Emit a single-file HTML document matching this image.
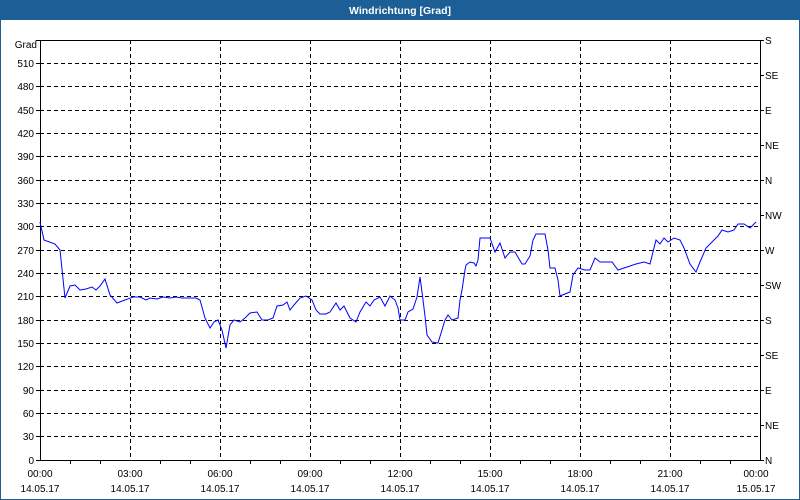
<!DOCTYPE html>
<html><head><style>
html,body{margin:0;padding:0;width:800px;height:500px;overflow:hidden;background:#fff;font-family:"Liberation Sans",sans-serif}
</style></head><body>
<svg width="800" height="500" xmlns="http://www.w3.org/2000/svg" font-family="Liberation Sans, sans-serif" font-size="10">
<rect x="0" y="0" width="800" height="500" fill="#fff"/>
<rect x="0" y="0" width="800" height="20" fill="#1c5f96"/>
<rect x="0" y="0" width="1" height="500" fill="#1c5f96"/>
<rect x="799" y="0" width="1" height="500" fill="#1c5f96"/>
<rect x="0" y="499" width="800" height="1" fill="#1c5f96"/>
<text x="400" y="14" fill="#fff" font-weight="bold" font-size="10.5" text-anchor="middle">Windrichtung [Grad]</text>
<g stroke="#000" stroke-dasharray="4,3" stroke-width="1">
<path d="M40 63.5H760M40 86.5H760M40 110.5H760M40 133.5H760M40 156.5H760M40 180.5H760M40 203.5H760M40 226.5H760M40 250.5H760M40 273.5H760M40 296.5H760M40 320.5H760M40 343.5H760M40 366.5H760M40 390.5H760M40 413.5H760M40 436.5H760"/>
<path d="M130.5 40V460M220.5 40V460M310.5 40V460M400.5 40V460M490.5 40V460M580.5 40V460M670.5 40V460"/>
</g>
<g stroke="#000" stroke-width="1" fill="none">
<path d="M40.5 40V460.5H760.5V40M40 40.5H760"/>
<path d="M36 40.5H40M36 63.5H40M36 86.5H40M36 110.5H40M36 133.5H40M36 156.5H40M36 180.5H40M36 203.5H40M36 226.5H40M36 250.5H40M36 273.5H40M36 296.5H40M36 320.5H40M36 343.5H40M36 366.5H40M36 390.5H40M36 413.5H40M36 436.5H40M36 460.5H40"/>
<path d="M760 40.5H764M760 75.5H764M760 110.5H764M760 145.5H764M760 180.5H764M760 215.5H764M760 250.5H764M760 285.5H764M760 320.5H764M760 355.5H764M760 390.5H764M760 425.5H764M760 460.5H764"/>
<path d="M70.5 460V464M100.5 460V464M160.5 460V464M190.5 460V464M250.5 460V464M280.5 460V464M340.5 460V464M370.5 460V464M430.5 460V464M460.5 460V464M520.5 460V464M550.5 460V464M610.5 460V464M640.5 460V464M700.5 460V464M730.5 460V464"/>
</g>
<g text-anchor="end" fill="#000">
<text x="37" y="48">Grad</text>
<text x="34" y="67">510</text><text x="34" y="90">480</text><text x="34" y="114">450</text><text x="34" y="137">420</text><text x="34" y="160">390</text><text x="34" y="184">360</text><text x="34" y="207">330</text><text x="34" y="230">300</text><text x="34" y="254">270</text><text x="34" y="277">240</text><text x="34" y="300">210</text><text x="34" y="324">180</text><text x="34" y="347">150</text><text x="34" y="370">120</text><text x="34" y="394">90</text><text x="34" y="417">60</text><text x="34" y="440">30</text><text x="34" y="464">0</text>
</g>
<g fill="#000">
<text x="765" y="44">S</text><text x="765" y="79">SE</text><text x="765" y="114">E</text><text x="765" y="149">NE</text><text x="765" y="184">N</text><text x="765" y="219">NW</text><text x="765" y="254">W</text><text x="765" y="289">SW</text><text x="765" y="324">S</text><text x="765" y="359">SE</text><text x="765" y="394">E</text><text x="765" y="429">NE</text><text x="765" y="464">N</text>
</g>
<g text-anchor="middle" fill="#000">
<text x="40" y="477">00:00</text><text x="130" y="477">03:00</text><text x="220" y="477">06:00</text><text x="310" y="477">09:00</text><text x="400" y="477">12:00</text><text x="490" y="477">15:00</text><text x="580" y="477">18:00</text><text x="670" y="477">21:00</text><text x="756" y="477">00:00</text>
<text x="40" y="492">14.05.17</text><text x="130" y="492">14.05.17</text><text x="220" y="492">14.05.17</text><text x="310" y="492">14.05.17</text><text x="400" y="492">14.05.17</text><text x="490" y="492">14.05.17</text><text x="580" y="492">14.05.17</text><text x="670" y="492">14.05.17</text><text x="756" y="492">15.05.17</text>
</g>
<polyline fill="none" stroke="#0000ff" stroke-width="1" points="40,222 44,240 55,244 60,250 65,298 70,286 75,285 80,290 86,289 92,287 96,290 100,286 105,279 110,295 117,303 125,300 133,297 140,297 146,300 150,298 157,299 163,297 170,298 176,297 182,298 190,298 196,298 200,300 205,318 210,328 214,322 218,320 222,330 226,348 230,325 234,320 240,322 245,318 250,313 257,312 262,320 268,320 273,318 277,306 283,305 287,302 290,310 294,305 300,298 306,296 312,300 316,310 320,314 326,314 330,312 336,303 340,310 344,306 350,318 356,322 360,312 366,302 370,306 374,300 380,297 385,306 390,296 395,300 398,308 400,320 405,320 408,312 413,309 417,297 420,277 422,292 425,316 427,335 432,342 438,343 442,330 445,320 448,315 452,320 458,318 460,300 462,290 465,270 466,265 470,262 474,263 476,266 478,260 480,238 490,238 495,252 500,243 505,258 510,252 515,252 522,264 525,264 530,256 533,240 536,234 545,234 548,250 550,268 555,268 558,280 560,296 565,294 570,292 573,275 578,268 585,270 590,270 595,258 600,262 612,262 618,270 624,268 630,266 636,264 644,262 650,264 656,240 660,244 664,238 668,242 674,238 680,240 684,248 690,264 696,272 700,262 706,248 712,242 718,236 722,230 728,232 734,230 738,224 744,224 750,228 756,222"/>
</svg>
</body></html>
